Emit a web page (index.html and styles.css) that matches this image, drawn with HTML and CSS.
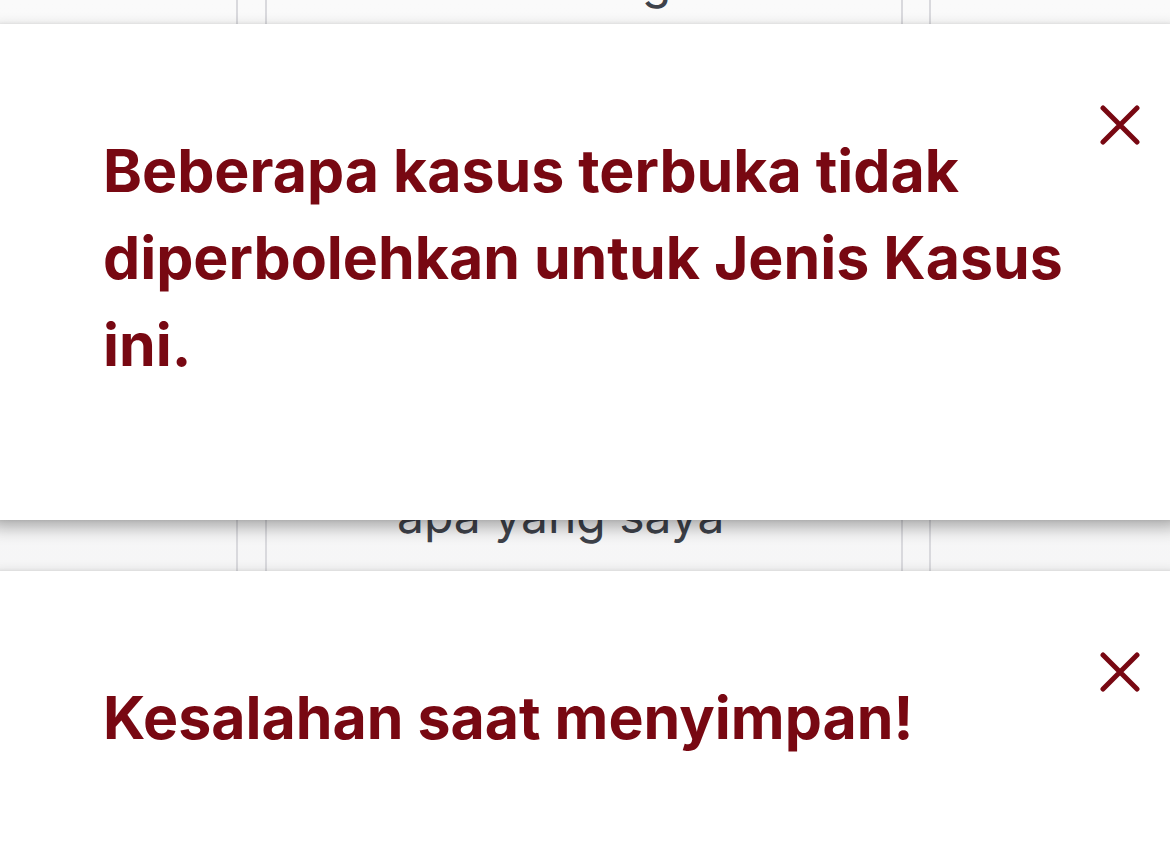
FILE: index.html
```html
<!DOCTYPE html>
<html lang="id">
<head>
<meta charset="utf-8">
<title>Kasus</title>
<link rel="stylesheet" href="styles.css">
</head>
<body>
<div class="table">
  <div class="col col-a"></div>
  <div class="col col-b"></div>
  <div class="col col-c">
    <div class="cell-text cell-top">sesuai dengan</div>
    <div class="cell-text cell-mid">apa yang saya</div>
  </div>
  <div class="col col-d"></div>
  <div class="col col-e"></div>
</div>

<div class="toast toast-one">
  <p class="toast-msg">Beberapa kasus terbuka tidak diperbolehkan untuk Jenis Kasus ini.</p>
  <button class="toast-close" aria-label="Tutup">
    <svg viewBox="0 0 40 40" width="40" height="40"><path d="M3 3 L37 37 M37 3 L3 37" /></svg>
  </button>
</div>

<div class="toast toast-two">
  <p class="toast-msg">Kesalahan saat menyimpan!</p>
  <button class="toast-close" aria-label="Tutup">
    <svg viewBox="0 0 40 40" width="40" height="40"><path d="M3 3 L37 37 M37 3 L3 37" /></svg>
  </button>
</div>
</body>
</html>
```

FILE: styles.css
```css
html, body {
  margin: 0;
  padding: 0;
  height: 100%;
  overflow: hidden;
}

body {
  background: #f7f7f8;
  font-family: "Inter", "Noto Sans", sans-serif;
  position: relative;
}

.table {
  display: grid;
  grid-template-columns: 238px 29px 636px 28px 1fr;
  height: 859px;
  background: linear-gradient(#fafafa, #f4f4f5);
}

.col {
  border-right: 2px solid #d9d9dd;
  box-sizing: border-box;
}

.col-e {
  border-right: none;
}

.col-c {
  overflow: hidden;
}

.cell-text {
  padding-left: 130px;
  font-size: 48px;
  line-height: 58px;
  height: 58px;
  color: #3e424a;
  font-weight: 400;
  white-space: nowrap;
}

.cell-top {
  margin-top: -48px;
}

.cell-mid {
  margin-top: 477px;
}

.toast {
  position: absolute;
  left: -10px;
  right: -10px;
  background: #ffffff;
  box-shadow: 0 7px 16px rgba(0, 0, 0, 0.32), 0 0 4px rgba(0, 0, 0, 0.08);
  padding: 103px 0 0 113px;
  box-sizing: border-box;
}

.toast-one {
  top: 24px;
  height: 496px;
}

.toast-two {
  top: 571px;
  height: 320px;
}

.toast-msg {
  margin: 0;
  width: 975px;
  font-size: 59px;
  line-height: 87px;
  font-weight: 700;
  color: #780812;
}

.toast-close {
  position: absolute;
  top: 81px;
  left: 1110px;
  width: 40px;
  height: 40px;
  padding: 0;
  border: none;
  background: none;
}

.toast-close svg {
  display: block;
}

.toast-close path {
  stroke: #780812;
  stroke-width: 5;
  stroke-linecap: round;
  fill: none;
}
```
